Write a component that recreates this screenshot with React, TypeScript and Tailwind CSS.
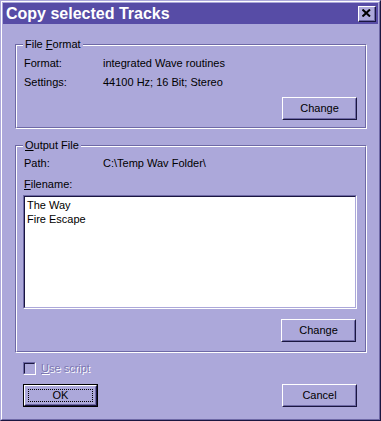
import React from "react";

const font = { fontFamily: '"Liberation Sans", Arial, sans-serif' };

function Btn({ children, def = false, className = "" }: { children: React.ReactNode; def?: boolean; className?: string }) {
  if (def) {
    return (
      <div className={"w-[75px] h-[23px] border border-[#000000] " + className}>
        <div className="w-full h-full border-t border-l border-t-white border-l-white border-b border-r border-b-[#1a1640] border-r-[#1a1640]">
          <div className="w-full h-full border-t border-l border-t-[#aca8da] border-l-[#aca8da] border-b border-r border-b-[#6e69a6] border-r-[#6e69a6] flex items-center justify-center p-[2px]">
            <div className="w-full h-full border border-dotted border-black flex items-center justify-center text-[11px] text-black leading-none">
              {children}
            </div>
          </div>
        </div>
      </div>
    );
  }
  return (
    <div className={"w-[75px] h-[23px] border-t border-l border-t-white border-l-white border-b border-r border-b-[#1a1640] border-r-[#1a1640] " + className}>
      <div className="w-full h-full border-t border-l border-t-[#aca8da] border-l-[#aca8da] border-b border-r border-b-[#6e69a6] border-r-[#6e69a6] flex items-center justify-center text-[11px] text-black leading-none">
        {children}
      </div>
    </div>
  );
}

function Group({ title, className = "", children }: { title: React.ReactNode; className?: string; children: React.ReactNode }) {
  return (
    <div className={"relative border-t border-l border-t-[#6e69a6] border-l-[#6e69a6] border-b border-r border-b-white border-r-white " + className}>
      <div className="w-full h-full border-t border-l border-t-white border-l-white border-b border-r border-b-[#6e69a6] border-r-[#6e69a6]">
        {children}
      </div>
      <div className="absolute left-[7px] top-[-7px] px-[2px] bg-[#aca8da] text-[11px] leading-[13px] text-black">
        {title}
      </div>
    </div>
  );
}

export default function App() {
  return (
    <div style={font} className="w-[381px] h-[421px] bg-[#aca8da] border-t border-l border-t-[#aca8da] border-l-[#aca8da] border-b border-r border-b-[#1a1640] border-r-[#1a1640]">
      <div className="w-full h-full border-t border-l border-t-white border-l-white border-b border-r border-b-[#6e69a6] border-r-[#6e69a6] p-px flex flex-col">
        {/* Title bar */}
        <div className="h-[21px] bg-[#574ca6] flex items-center justify-between pl-[3px] pr-[2px]">
          <span className="text-white font-bold text-[16px] leading-none mt-[1px]">Copy selected Tracks</span>
          <div className="w-[18px] h-[16px] border-t border-l border-t-white border-l-white border-b border-r border-b-[#1a1640] border-r-[#1a1640]">
            <div className="w-full h-full bg-[#aca8da] border-b border-r border-b-[#6e69a6] border-r-[#6e69a6] flex items-center justify-center">
              <svg width="9" height="8" viewBox="0 0 9 8">
                <path d="M0.5 0.5 L8 7.5 M8 0.5 L0.5 7.5" stroke="#000" strokeWidth="2" />
              </svg>
            </div>
          </div>
        </div>

        {/* File Format */}
        <Group
          className="mt-[20px] ml-[12px] mr-[11px] h-[85px]"
          title={<span>File <span className="underline">F</span>ormat</span>}
        >
          <div className="flex flex-col pt-[11px] pl-[7px] pr-[8px] text-[11px] text-black">
            <div className="flex h-[13px] leading-[13px]">
              <span className="w-[79px]">Format:</span>
              <span>integrated Wave routines</span>
            </div>
            <div className="flex h-[13px] leading-[13px] mt-[6px]">
              <span className="w-[79px]">Settings:</span>
              <span>44100 Hz; 16 Bit; Stereo</span>
            </div>
            <div className="flex justify-end mt-[8px]">
              <Btn>
                <span>Chan<span className="underline">g</span>e</span>
              </Btn>
            </div>
          </div>
        </Group>

        {/* Output File */}
        <Group
          className="mt-[16px] ml-[12px] mr-[11px] h-[208px]"
          title={<span><span className="underline">O</span>utput File</span>}
        >
          <div className="flex flex-col pt-[10px] pl-[6px] pr-[8px] text-[11px] text-black">
            <div className="flex h-[13px] leading-[13px] pl-px">
              <span className="w-[79px]">Path:</span>
              <span>C:\Temp Wav Folder\</span>
            </div>
            <div className="flex h-[13px] leading-[13px] mt-[8px] pl-px">
              <span><span className="underline">F</span>ilename:</span>
            </div>
            <div className="mt-[4px] h-[114px] border-t border-l border-t-[#6e69a6] border-l-[#6e69a6] border-b border-r border-b-white border-r-white">
              <div className="w-full h-full bg-white border-t border-l border-t-[#1a1640] border-l-[#1a1640] border-b border-r border-b-[#aca8da] border-r-[#aca8da] pl-[2px] pt-[1px]">
                <div className="h-[14px] leading-[14px]">The Way</div>
                <div className="h-[14px] leading-[14px]">Fire Escape</div>
              </div>
            </div>
            <div className="flex justify-end mt-[10px] pr-px">
              <Btn>Change</Btn>
            </div>
          </div>
        </Group>

        {/* Use script */}
        <div className="flex items-center mt-[9px] ml-[20px] h-[13px]">
          <div className="w-[13px] h-[13px] border-t border-l border-t-[#6e69a6] border-l-[#6e69a6] border-b border-r border-b-white border-r-white">
            <div className="w-full h-full border-t border-l border-t-[#1a1640] border-l-[#1a1640] border-b border-r border-b-[#aca8da] border-r-[#aca8da] bg-[#aca8da]" />
          </div>
          <span className="ml-[5px] text-[11px] leading-[13px] text-[#7c77b2] [text-shadow:1px_1px_0_#ffffff]">
            <span className="underline">U</span>se script
          </span>
        </div>

        {/* Buttons */}
        <div className="flex justify-between mt-[9px] ml-[20px] mr-[21px]">
          <Btn def>OK</Btn>
          <Btn>Cancel</Btn>
        </div>
      </div>
    </div>
  );
}
